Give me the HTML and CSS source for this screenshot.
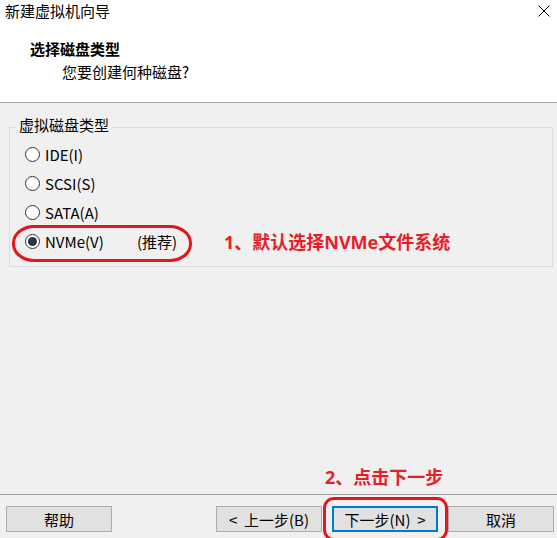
FILE: index.html
```html
<!DOCTYPE html>
<html lang="zh-CN">
<head>
<meta charset="utf-8">
<title>新建虚拟机向导</title>
<link rel="stylesheet" href="styles.css">
</head>
<body>
<div class="window">
  <div class="top">
    <div class="titlebar">
      <span class="title">新建虚拟机向导</span>
      <svg class="close" width="12" height="12" viewBox="0 0 12 12"><path d="M0.5 0.5 L11.5 11.5 M11.5 0.5 L0.5 11.5" stroke="#000" stroke-width="1" fill="none"/></svg>
    </div>
    <div class="head-title">选择磁盘类型</div>
    <div class="head-sub">您要创建何种磁盘?</div>
  </div>
  <div class="main">
    <fieldset class="group">
      <legend>虚拟磁盘类型</legend>
      <div class="options">
        <div class="option"><span class="opt-main"><span class="radio"></span><span>IDE(I)</span></span></div>
        <div class="option"><span class="opt-main"><span class="radio"></span><span>SCSI(S)</span></span></div>
        <div class="option"><span class="opt-main"><span class="radio"></span><span>SATA(A)</span></span></div>
        <div class="option marked"><span class="opt-main"><span class="radio checked"></span><span class="opt-name">NVMe(V)</span><span>(推荐)</span></span><span class="note">1、默认选择NVMe文件系统</span><span class="ring"></span></div>
      </div>
    </fieldset>
    <div class="note note2">2、点击下一步</div>
  </div>
  <div class="footer">
    <button class="btn">帮助</button>
    <button class="btn back">&lt;&nbsp; 上一步(B)</button>
    <button class="btn next">下一步(N)&nbsp; &gt;<span class="box"></span></button>
    <button class="btn">取消</button>
  </div>
</div>
</body>
</html>
```
FILE: styles.css
```css
html, body {
  margin: 0;
  padding: 0;
}
body {
  width: 557px;
  height: 538px;
  overflow: hidden;
  background: #f0f0f0;
  font-family: "Noto Sans CJK SC", "Noto Sans", sans-serif;
  font-size: 15px;
  color: #000;
}
.window {
  display: flex;
  flex-direction: column;
  height: 538px;
}
.top {
  background: #fff;
  height: 102px;
  border-bottom: 1px solid #a0a0a0;
}
.titlebar {
  display: flex;
  justify-content: space-between;
  align-items: flex-start;
  padding: 3px 7px 0 5px;
  line-height: 15px;
}
.close {
  margin-top: 2px;
  display: block;
}
.head-title {
  margin-top: 23px;
  padding-left: 30px;
  line-height: 15px;
  font-weight: 700;
}
.head-sub {
  margin-top: 8px;
  padding-left: 62px;
  line-height: 15px;
}
.main {
  height: 391px;
  display: flex;
  flex-direction: column;
}
.group {
  margin: 14px 4px 0 9px;
  padding: 3px 0 10px 0;
  border: 1px solid #dcdcdc;
  min-width: 0;
}
.group legend {
  margin-left: 6px;
  padding: 0 3px 5px;
  line-height: 15px;
}
.options {
  padding-left: 15px;
}
.option {
  display: flex;
  align-items: center;
  height: 29px;
  position: relative;
}
.opt-main {
  display: flex;
  align-items: center;
  width: 199px;
  line-height: 15px;
}
.radio {
  width: 15px;
  height: 15px;
  box-sizing: border-box;
  border: 1px solid #333;
  border-radius: 50%;
  background: #fff;
  margin-right: 5px;
  display: flex;
  align-items: center;
  justify-content: center;
  flex: none;
}
.radio.checked::after {
  content: "";
  width: 9px;
  height: 9px;
  border-radius: 50%;
  background: #2b3645;
}
.opt-name {
  width: 92px;
}
.note {
  color: #e81d27;
  font-family: "Open Sans", "Noto Sans CJK SC", sans-serif;
  font-weight: 700;
  font-size: 18px;
  line-height: 18px;
  white-space: nowrap;
}
.ring {
  position: absolute;
  left: -13px;
  top: -2px;
  width: 180px;
  height: 37px;
  box-sizing: border-box;
  border: 3.5px solid #e3161e;
  border-radius: 22px / 18px;
}
.note2 {
  margin-top: auto;
  margin-bottom: 8px;
  padding-left: 325px;
}
.footer {
  border-top: 1px solid #a0a0a0;
  display: flex;
  padding: 11px 3px 0 6px;
  gap: 10px;
  flex: 1;
}
.btn {
  width: 106px;
  height: 26px;
  box-sizing: border-box;
  background: #e1e1e1;
  border: 1px solid #adadad;
  font-family: inherit;
  font-size: 15px;
  line-height: 15px;
  color: #000;
  padding: 0;
  margin: 0;
  position: relative;
}
.back {
  margin-left: auto;
}
.next {
  border: 2px solid #0078d7;
}
.box {
  position: absolute;
  left: -11px;
  top: -11px;
  width: 125px;
  height: 44px;
  box-sizing: border-box;
  border: 3.5px solid #e3161e;
  border-radius: 11px;
}
```
